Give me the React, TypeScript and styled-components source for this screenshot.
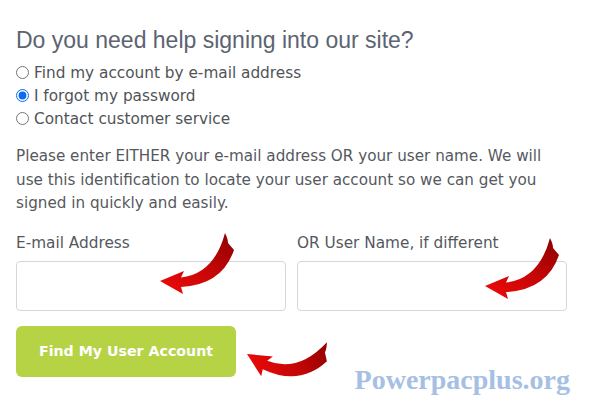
import React, { useState } from "react";
import styled, { createGlobalStyle } from "styled-components";

const GlobalStyle = createGlobalStyle`
  html, body {
    margin: 0;
    padding: 0;
    background: #ffffff;
  }
`;

const options = [
  "Find my account by e-mail address",
  "I forgot my password",
  "Contact customer service",
];

type ArrowProps = { x: number; y: number; rotate?: number; id: string };

// red curved pointer, tip sits at (x, y)
const Arrow = ({ x, y, rotate = 0, id }: ArrowProps) => (
  <ArrowSvg
    width="80"
    height="68"
    viewBox="0 0 80 68"
    style={{
      left: x - 2,
      top: y - 51,
      transform: `rotate(${rotate}deg)`,
    }}
  >
    <defs>
      <linearGradient id={id} x1="0" y1="1" x2="1" y2="0">
        <stop offset="0" stopColor="#f00a0a" />
        <stop offset="0.55" stopColor="#c40606" />
        <stop offset="1" stopColor="#8a0000" />
      </linearGradient>
    </defs>
    <path
      d="M2 51 L26 41 L23 47.5 Q56 44 67 3 Q70 9 70 13 L76 20 Q64 55 23 57 L25 64 Z"
      fill={`url(#${id})`}
    />
  </ArrowSvg>
);

const App = () => {
  const [choice, setChoice] = useState(1);
  return (
    <>
      <GlobalStyle />
      <Page>
        <Title>Do you need help signing into our site?</Title>
        <Options>
          {options.map((o, i) => (
            <Option key={o}>
              <Radio
                type="radio"
                name="help"
                checked={choice === i}
                onChange={() => setChoice(i)}
              />
              {o}
            </Option>
          ))}
        </Options>
        <Info>
          Please enter EITHER your e-mail address OR your user name. We will
          use this identification to locate your user account so we can get
          you signed in quickly and easily.
        </Info>
        <Fields>
          <Field>
            <Label>E-mail Address</Label>
            <Input type="text" />
          </Field>
          <Field>
            <Label>OR User Name, if different</Label>
            <Input type="text" />
          </Field>
        </Fields>
        <SubmitButton>Find My User Account</SubmitButton>
        <Arrow x={160} y={281} id="a1" />
        <Arrow x={485} y={286} id="a2" />
        <Arrow x={247} y={354} rotate={28} id="a3" />
        <Watermark>Powerpacplus.org</Watermark>
      </Page>
    </>
  );
};

export default App;

const Page = styled.div`
  position: relative;
  width: 600px;
  height: 400px;
  box-sizing: border-box;
  padding: 25px 16px 0 16px;
  overflow: hidden;
  background: #ffffff;
  font-family: "DejaVu Sans", "Open Sans", sans-serif;
  color: #555a60;
`;

const Title = styled.h1`
  margin: 0;
  font-family: "Liberation Sans", Arial, sans-serif;
  font-weight: 400;
  font-size: 23px;
  line-height: 30px;
  color: #5b6470;
`;

const Options = styled.div`
  margin-top: 6px;
  display: flex;
  flex-direction: column;
`;

const Option = styled.label`
  display: flex;
  align-items: center;
  gap: 5px;
  height: 23px;
  font-size: 15.3px;
  color: #4f5358;
`;

const Radio = styled.input`
  margin: 0;
  width: 13px;
  height: 13px;
  accent-color: #0a6cf0;
`;

const Info = styled.p`
  margin: 15px 0 0 0;
  width: 545px;
  font-size: 15.2px;
  line-height: 23.5px;
  color: #55595e;
`;

const Fields = styled.div`
  margin-top: 18px;
  display: flex;
  gap: 11px;
`;

const Field = styled.div`
  display: flex;
  flex-direction: column;
  gap: 9px;
`;

const Label = styled.label`
  font-size: 15.3px;
  line-height: 18px;
  color: #54585d;
`;

const Input = styled.input`
  box-sizing: border-box;
  width: 270px;
  height: 50px;
  border: 1px solid #d3d8de;
  border-radius: 4px;
  outline: none;
  background: #ffffff;
`;

const SubmitButton = styled.button`
  margin-top: 15px;
  width: 220px;
  height: 51px;
  border: none;
  border-radius: 6px;
  background: #b6d345;
  color: #ffffff;
  font-family: "DejaVu Sans", "Open Sans", sans-serif;
  font-weight: 700;
  font-size: 14.2px;
  cursor: pointer;
`;

const ArrowSvg = styled.svg`
  position: absolute;
  transform-origin: 2px 51px;
  pointer-events: none;
`;

const Watermark = styled.div`
  position: absolute;
  right: 30px;
  bottom: 4px;
  font-family: "Liberation Serif", "DejaVu Serif", serif;
  font-weight: 700;
  font-size: 28px;
  line-height: 32px;
  color: #a6bfe4;
`;
